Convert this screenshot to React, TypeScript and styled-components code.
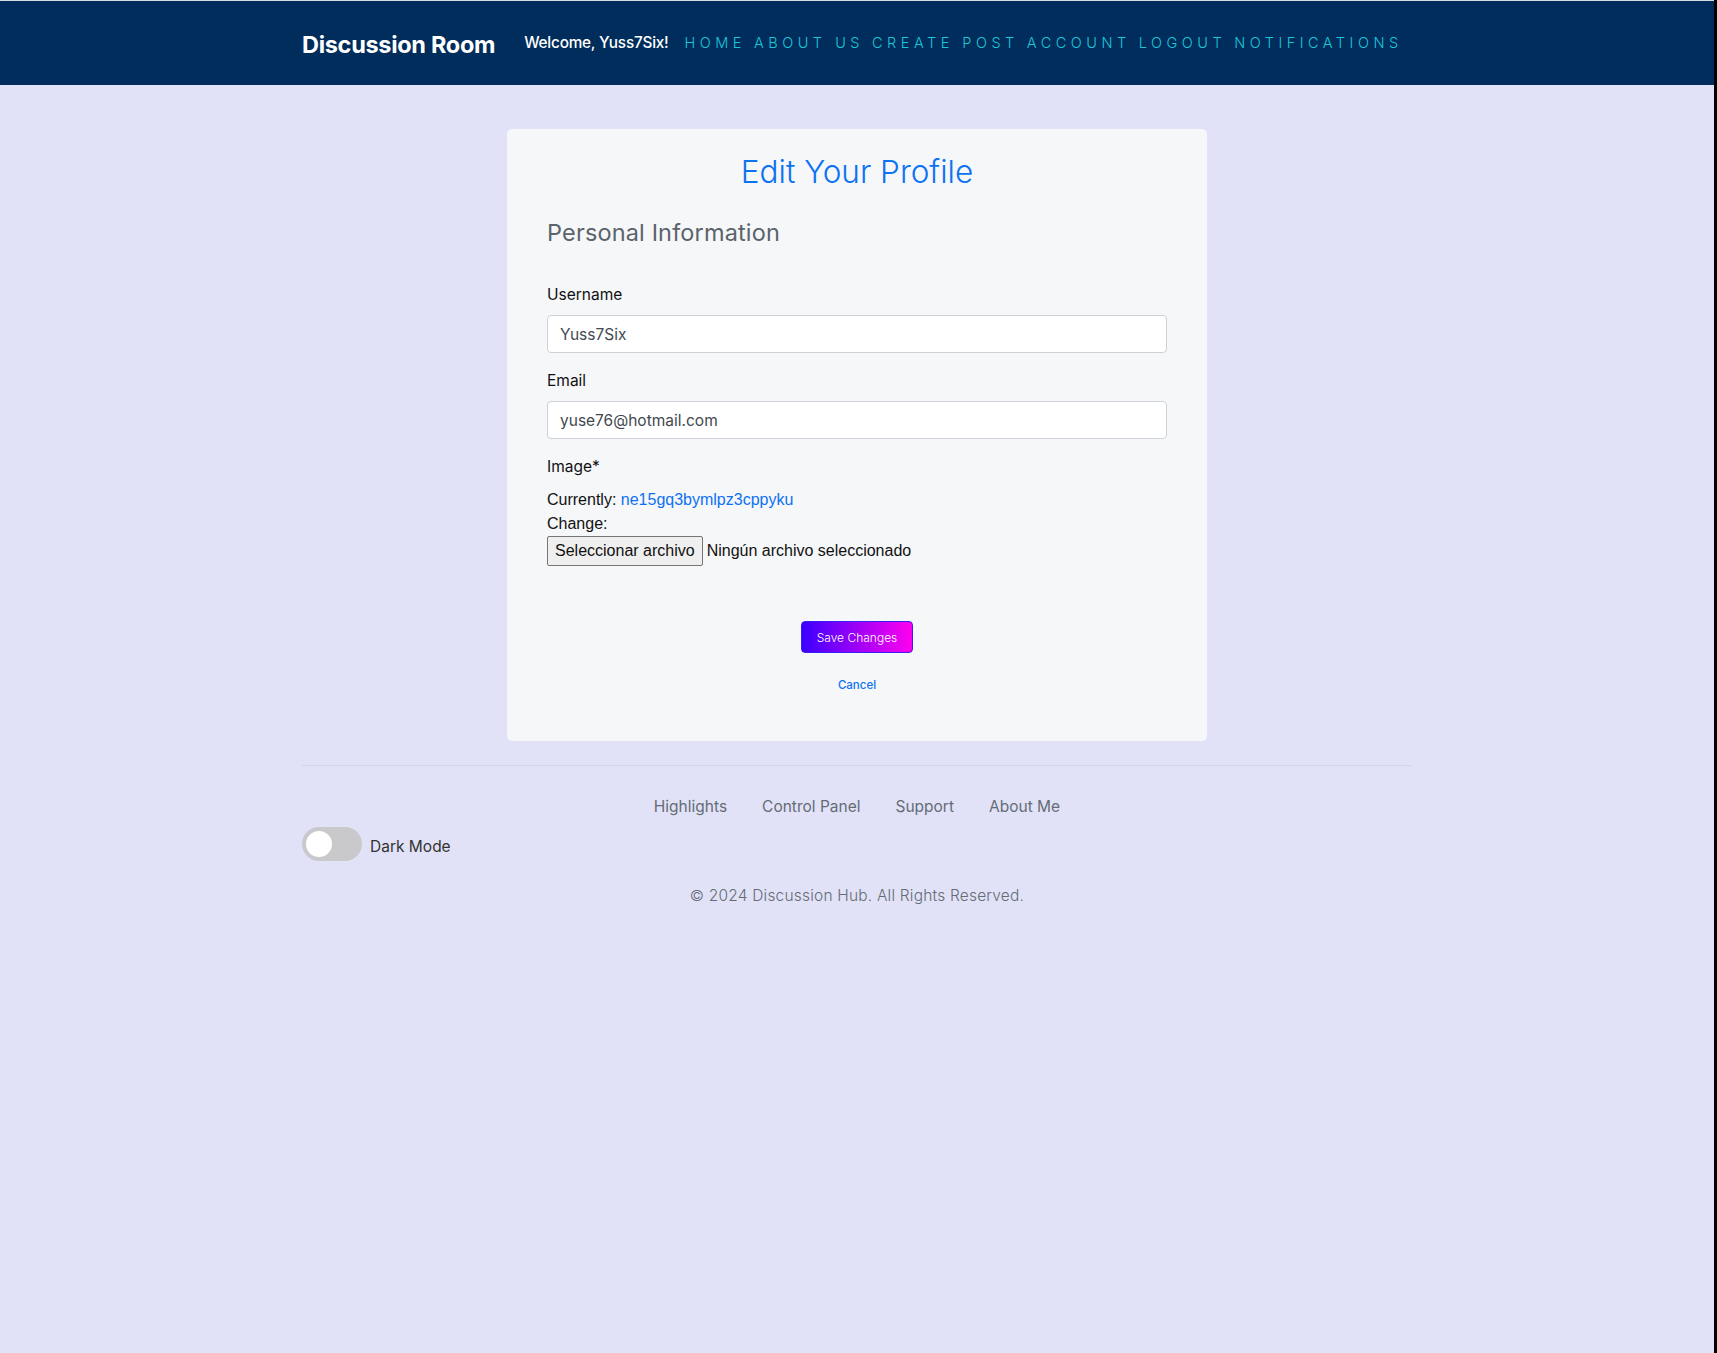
import React from "react";
import styled, { createGlobalStyle } from "styled-components";

const GlobalStyle = createGlobalStyle`
  html, body { margin: 0; padding: 0; background: #000; }
  body { font-family: Inter, "Noto Sans", "Liberation Sans", sans-serif; }
  * { box-sizing: border-box; }
`;

const Page = styled.div`
  min-height: 100vh;
  margin-right: 3px;
  background: #e1e2f7;
  display: flex;
  flex-direction: column;
`;

const NavBar = styled.header`
  background: #002d5b;
  border-top: 1px solid #d9dbe2;
  height: 85px;
  display: flex;
  justify-content: center;
`;

const NavInner = styled.div`
  width: 1110px;
  display: flex;
  align-items: center;
  padding-bottom: 2px;
`;

const Brand = styled.a`
  font-family: Inter, "Liberation Sans", sans-serif;
  font-weight: 700;
  font-size: 23.5px;
  letter-spacing: -0.3px;
  color: #fff;
  margin-right: 29px;
  padding-top: 4px;
`;

const Welcome = styled.span`
  font-family: Inter, "Liberation Sans", sans-serif;
  font-weight: 500;
  font-size: 15.3px;
  letter-spacing: -0.2px;
  color: #fff;
  margin-right: 16px;
  padding-top: 1px;
`;

const NavList = styled.nav`
  display: flex;
  gap: 8px;
`;

const NavLink = styled.a`
  font-family: Inter, "Noto Sans", sans-serif;
  font-weight: 300;
  font-size: 14.5px;
  letter-spacing: 4.5px;
  color: #1ec6d9;
  text-transform: uppercase;
`;

const Main = styled.main`
  display: flex;
  flex-direction: column;
  align-items: center;
  padding-top: 44px;
`;

const Card = styled.section`
  width: 700px;
  background: #f6f7f9;
  border-radius: 5px;
  padding: 20px 40px 47px;
  display: flex;
  flex-direction: column;
`;

const Title = styled.h1`
  margin: 0;
  text-align: center;
  font-family: Inter, "Noto Sans", sans-serif;
  font-weight: 300;
  font-size: 31.5px;
  line-height: 46px;
  color: #0d72f2;
`;

const SectionTitle = styled.h2`
  margin: 23px 0 0;
  font-family: Inter, "Noto Sans", sans-serif;
  font-weight: 400;
  font-size: 23.5px;
  letter-spacing: 0.15px;
  line-height: 30px;
  color: #5b636b;
`;

const Field = styled.div<{ $top: number }>`
  display: flex;
  flex-direction: column;
  margin-top: ${(p) => p.$top}px;
`;

const Label = styled.label`
  font-size: 15.5px;
  line-height: 24px;
  color: #111;
  margin-bottom: 8px;
`;

const Input = styled.input`
  height: 38px;
  width: 100%;
  border: 1px solid #cdd2d8;
  border-radius: 4px;
  background: #fff;
  padding: 0 12px;
  font-family: Inter, "Noto Sans", sans-serif;
  font-size: 15.5px;
  color: #43494f;
  outline: none;
`;

const FileArea = styled.div`
  display: flex;
  flex-direction: column;
  margin-top: 1px;
  font-family: "Liberation Sans", Arial, sans-serif;
  font-size: 16px;
  line-height: 24px;
  color: #111;
`;

const Link = styled.a`
  color: #0d72f2;
  text-decoration: none;
`;

const FileRow = styled.div`
  display: flex;
  align-items: center;
  gap: 4px;
`;

const FileButton = styled.button`
  height: 30px;
  padding: 0 7px;
  background: #efefef;
  border: 1px solid #767676;
  border-radius: 2px;
  font-family: "Liberation Sans", Arial, sans-serif;
  font-size: 16px;
  color: #111;
`;

const Actions = styled.div`
  display: flex;
  flex-direction: column;
  align-items: center;
  margin-top: 55px;
  gap: 23px;
`;

const SaveButton = styled.button`
  width: 112px;
  height: 32px;
  border: 1px solid #3a1cf5;
  border-radius: 4px;
  background: linear-gradient(90deg, #3c00ff 0%, #ff00ee 100%);
  color: #fff;
  font-family: Inter, "Noto Sans", sans-serif;
  font-weight: 300;
  font-size: 12px;
  cursor: pointer;
`;

const Cancel = styled.a`
  font-family: Inter, "Noto Sans", sans-serif;
  font-weight: 500;
  font-size: 11.5px;
  line-height: 18px;
  color: #0d72f2;
`;

const Footer = styled.footer`
  width: 1110px;
  margin: 24px auto 0;
  border-top: 1px solid #d3d4ea;
  display: flex;
  flex-direction: column;
`;

const FooterLinks = styled.nav`
  display: flex;
  justify-content: center;
  gap: 35px;
  margin-top: 29px;
`;

const FooterLink = styled.a`
  font-size: 15.5px;
  line-height: 24px;
  color: #646c75;
`;

const ToggleRow = styled.div`
  display: flex;
  align-items: center;
  gap: 8px;
  margin-top: 8px;
`;

const Switch = styled.span`
  width: 60px;
  height: 34px;
  border-radius: 17px;
  background: #c9c9cc;
  display: flex;
  align-items: center;
  padding-left: 4px;
`;

const Knob = styled.span`
  width: 26px;
  height: 26px;
  border-radius: 50%;
  background: #fff;
`;

const ToggleLabel = styled.span`
  font-size: 15.5px;
  color: #333;
  margin-top: 4px;
`;

const Copyright = styled.p`
  margin: 23px 0 0;
  text-align: center;
  font-family: Inter, "Noto Sans", sans-serif;
  font-weight: 300;
  font-size: 15.5px;
  letter-spacing: 0.2px;
  line-height: 24px;
  color: #646c75;
`;

const navItems = ["Home", "About us", "Create post", "Account", "Logout", "Notifications"];
const footerItems = ["Highlights", "Control Panel", "Support", "About Me"];

export default function App() {
  return (
    <>
      <GlobalStyle />
      <Page>
        <NavBar>
          <NavInner>
            <Brand>Discussion Room</Brand>
            <Welcome>Welcome, Yuss7Six!</Welcome>
            <NavList>
              {navItems.map((n) => (
                <NavLink key={n}>{n}</NavLink>
              ))}
            </NavList>
          </NavInner>
        </NavBar>
        <Main>
          <Card>
            <Title>Edit Your Profile</Title>
            <SectionTitle>Personal Information</SectionTitle>
            <Field $top={35}>
              <Label>Username</Label>
              <Input defaultValue="Yuss7Six" />
            </Field>
            <Field $top={16}>
              <Label>Email</Label>
              <Input defaultValue="yuse76@hotmail.com" />
            </Field>
            <Field $top={16}>
              <Label as="span">Image*</Label>
            </Field>
            <FileArea>
              <span>
                Currently: <Link>ne15gq3bymlpz3cppyku</Link>
              </span>
              <span>Change:</span>
              <FileRow>
                <FileButton>Seleccionar archivo</FileButton>
                <span>Ningún archivo seleccionado</span>
              </FileRow>
            </FileArea>
            <Actions>
              <SaveButton>Save Changes</SaveButton>
              <Cancel>Cancel</Cancel>
            </Actions>
          </Card>
          <Footer>
            <FooterLinks>
              {footerItems.map((f) => (
                <FooterLink key={f}>{f}</FooterLink>
              ))}
            </FooterLinks>
            <ToggleRow>
              <Switch>
                <Knob />
              </Switch>
              <ToggleLabel>Dark Mode</ToggleLabel>
            </ToggleRow>
            <Copyright>© 2024 Discussion Hub. All Rights Reserved.</Copyright>
          </Footer>
        </Main>
      </Page>
    </>
  );
}
